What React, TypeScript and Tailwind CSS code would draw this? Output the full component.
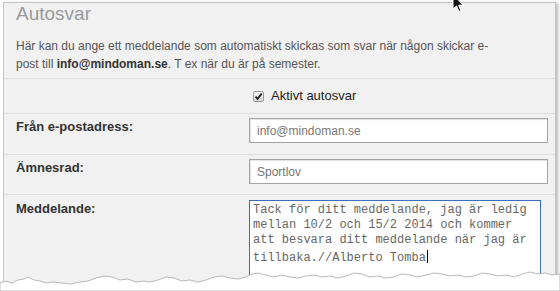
import React from "react";

export default function App() {
  const font = { fontFamily: '"Liberation Sans", Arial, sans-serif' };
  return (
    <div className="relative w-[560px] h-[291px] overflow-hidden bg-white" style={font}>
      <div className="ml-[3px] mt-[2px] w-[553px] h-[320px] border border-[#c6c6c6] bg-[#f1f1f1] shadow-[2px_1px_3px_rgba(0,0,0,0.28)]">
        <div className="px-[12px]">
          <div className="text-[19px] leading-[21px] text-[#9a9a9a]">Autosvar</div>
          <p className="mt-[13px] text-[12px] leading-[18px] text-[#555]">
            Här kan du ange ett meddelande som automatiskt skickas som svar när någon skickar e-
            <br />
            post till <b className="text-[#333]">info@mindoman.se</b>. T ex när du är på semester.
          </p>
        </div>
        <div className="mt-[5px] border-t border-[#dedede]" />
        <div className="flex h-[35px] items-center border-b border-[#dedede] pl-[249px]">
          <div className="flex h-[11px] w-[11px] items-center justify-center rounded-[2px] border border-[#9a9a9a] bg-gradient-to-b from-[#f4f4f4] to-[#d8d8d8]">
            <svg width="9" height="9" viewBox="0 0 9 9">
              <path d="M1.5 4.6 L3.6 6.8 L7.6 1.6" fill="none" stroke="#222" strokeWidth="1.8" />
            </svg>
          </div>
          <span className="ml-[7px] text-[13px] leading-[18px] text-[#222]">Aktivt autosvar</span>
        </div>
        <div className="flex items-start border-b border-[#dedede] pt-[4px] pb-[11px]">
          <div className="w-[245px] pl-[12px] text-[13px] font-bold leading-[18px] text-[#333]">Från e-postadress:</div>
          <div className="flex h-[25px] w-[299px] items-center border border-[#a3a3a3] bg-white pl-[7px] text-[12px] text-[#777] shadow-[inset_1px_1px_1px_rgba(0,0,0,0.12)]">
            info@mindoman.se
          </div>
        </div>
        <div className="flex items-start border-b border-[#dedede] pt-[4px] pb-[10px]">
          <div className="w-[245px] pl-[12px] text-[13px] font-bold leading-[18px] text-[#333]">Ämnesrad:</div>
          <div className="flex h-[25px] w-[299px] items-center border border-[#a3a3a3] bg-white pl-[7px] text-[12px] text-[#777] shadow-[inset_1px_1px_1px_rgba(0,0,0,0.12)]">
            Sportlov
          </div>
        </div>
        <div className="flex items-start pt-[5px]">
          <div className="w-[245px] pl-[12px] text-[13px] font-bold leading-[18px] text-[#333]">Meddelande:</div>
          <div
            className="h-[110px] w-[292px] border border-[#3c6dbf] bg-white pl-[3px] pt-[2px] text-[12px] leading-[15px] text-[#666] whitespace-pre"
            style={{ fontFamily: '"Liberation Mono", "Courier New", monospace' }}
          >
            {"Tack för ditt meddelande, jag är ledig\nmellan 10/2 och 15/2 2014 och kommer\natt besvara ditt meddelande när jag är\ntillbaka.//Alberto Tomba"}
            <span className="ml-[1px] inline-block h-[13px] w-px translate-y-[2px] bg-black align-baseline" />
          </div>
        </div>
      </div>

      {/* torn paper edge */}
      <svg className="absolute left-0 top-[264px]" width="560" height="27" viewBox="0 0 560 27">
        <path
          d="M0 19 L6 17 L12 19 L18 16 L24 15 L28 13 L34 16 L40 17 L46 19 L54 18 L62 19 L70 20 L80 18 L88 17 L96 14 L104 12 L112 13 L120 16 L128 15 L136 18 L144 17 L150 18 L158 16 L166 13 L174 14 L182 17 L190 16 L198 18 L206 16 L214 13 L222 12 L230 14 L238 15 L246 13 L252 10 L258 9 L266 11 L274 13 L282 11 L290 13 L298 14 L306 12 L314 11 L322 13 L330 12 L338 14 L346 12 L354 9 L362 10 L370 13 L378 12 L386 14 L394 13 L402 10 L410 11 L418 13 L426 11 L434 9 L442 10 L450 12 L458 11 L466 13 L474 12 L482 9 L490 10 L498 12 L506 11 L514 13 L522 10 L530 8 L538 10 L546 9 L552 11 L560 10 L560 27 L0 27 Z"
          fill="#ffffff"
          stroke="#b9b9b9"
          strokeWidth="1"
        />
      </svg>

      {/* mouse pointer */}
      <svg className="absolute left-[450px] top-0" width="16" height="14" viewBox="0 0 16 14">
        <path d="M3 -6 L3 9 L6.5 6 L9 11.5 L11 10.5 L8.6 5.3 L13 5 Z" fill="#111" stroke="#fff" strokeWidth="1" />
      </svg>
    </div>
  );
}
